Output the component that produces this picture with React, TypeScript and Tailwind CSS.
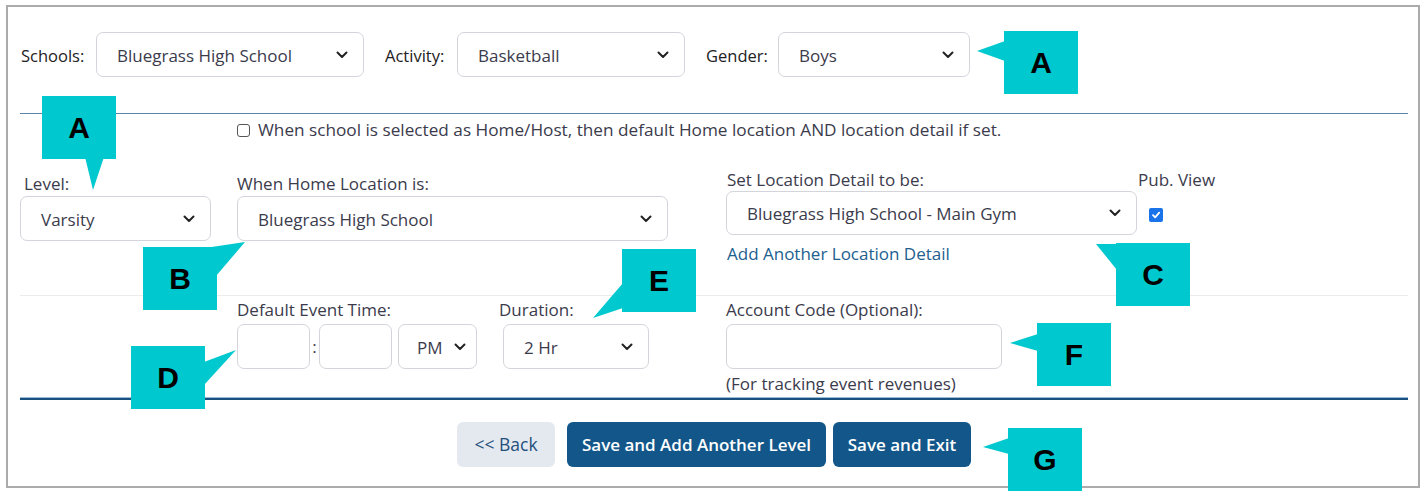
import React from "react";

const FONT = { fontFamily: '"Open Sans", "Noto Sans", Arial, sans-serif' } as React.CSSProperties;

function Chevron() {
  return (
    <svg width="12" height="8" viewBox="0 0 12 8" className="shrink-0">
      <path d="M1.5 1.5 L6 6 L10.5 1.5" fill="none" stroke="#222" strokeWidth="2" strokeLinecap="round" strokeLinejoin="round" />
    </svg>
  );
}

function Select({ value, w, h = "h-[45px]", pl = "pl-[20px]", pr = "pr-[15px]" }: { value: string; w: string; h?: string; pl?: string; pr?: string }) {
  return (
    <div className={`${w} ${h} ${pl} ${pr} shrink-0 flex items-center justify-between rounded-[7px] border border-[#d4d4dc] bg-white text-[17px] text-[#3b3b4c]`}>
      <span className="whitespace-nowrap pt-[2px]">{value}</span>
      <Chevron />
    </div>
  );
}

function Box({ w }: { w: string }) {
  return <div className={`${w} h-[45px] shrink-0 rounded-[7px] border border-[#d4d4dc] bg-white`} />;
}

type Callout = { l: string; x: number; y: number; tri: string };
const callouts: Callout[] = [
  { l: "A", x: 1004, y: 31, tri: "977,51 1005,41 1005,61" },
  { l: "A", x: 42, y: 96, tri: "85,157 93,190 104,157" },
  { l: "B", x: 143, y: 247, tri: "205,248 245,242 216,276" },
  { l: "C", x: 1116, y: 243, tri: "1096,244 1132,244 1117,270" },
  { l: "D", x: 131, y: 346, tri: "204,362 236,350 204,385" },
  { l: "E", x: 622, y: 249, tri: "593,318 623,283 623,308" },
  { l: "F", x: 1037, y: 323, tri: "1010,343 1038,334 1038,351" },
  { l: "G", x: 1008, y: 428, tri: "983,447 1009,438 1009,454" },
];

export default function App() {
  return (
    <div className="relative w-[1426px] h-[498px] bg-white overflow-hidden" style={FONT}>
      <div className="pt-[5px] pl-[6px]">
        <div className="w-[1414px] h-[483px] border-2 border-[#ababab] bg-white">
          {/* Row 1 */}
          <div className="flex items-center mt-[25px] pl-[13px] h-[45px] text-[16.5px] text-[#222]">
            <div className="w-[75px] shrink-0 pt-[3px]">Schools:</div>
            <Select value="Bluegrass High School" w="w-[268px]" />
            <div className="w-[72px] ml-[21px] shrink-0 pt-[3px]">Activity:</div>
            <Select value="Basketball" w="w-[228px]" />
            <div className="w-[72px] ml-[21px] shrink-0 pt-[3px]">Gender:</div>
            <Select value="Boys" w="w-[192px]" />
          </div>
          {/* HR */}
          <div className="mt-[36px] ml-[12px] w-[1388px] h-px bg-[#5a84a8]" />
          {/* Checkbox row */}
          <div className="mt-[5px] pl-[229px] flex items-center h-[22px] text-[17.2px] text-[#3b3b4c]">
            <div className="w-[13px] h-[13px] rounded-[3px] border border-[#555] bg-white mr-[8px] shrink-0" />
            <span className="whitespace-nowrap">When school is selected as Home/Host, then default Home location AND location detail if set.</span>
          </div>
          {/* Row 2 */}
          <div className="flex items-start h-[154px] text-[17px] text-[#3b3b4c]">
            <div className="ml-[12px] mt-[32px] flex flex-col">
              <div className="h-[22px] leading-[22px] pl-[4px]">Level:</div>
              <div className="mt-[1px]"><Select value="Varsity" w="w-[191px]" /></div>
            </div>
            <div className="ml-[26px] mt-[32px] flex flex-col">
              <div className="h-[22px] leading-[22px]">When Home Location is:</div>
              <div className="mt-[1px]"><Select value="Bluegrass High School" w="w-[431px]" /></div>
            </div>
            <div className="ml-[58px] mt-[28px] flex flex-col">
              <div className="h-[22px] leading-[22px] pl-[1px]">Set Location Detail to be:</div>
              <div><Select value="Bluegrass High School - Main Gym" w="w-[411px]" h="h-[44px]" /></div>
              <div className="mt-[8px] h-[22px] leading-[22px] pl-[1px] text-[#22608f]">Add Another Location Detail</div>
            </div>
            <div className="ml-[1px] mt-[28px] flex flex-col">
              <div className="h-[22px] leading-[22px]">Pub. View</div>
              <div className="mt-[17px] ml-[11px] w-[14px] h-[14px] rounded-[2px] bg-[#1a73e8] flex items-center justify-center">
                <svg width="10" height="10" viewBox="0 0 10 10">
                  <path d="M2 5.2 L4.2 7.4 L8.2 2.6" fill="none" stroke="#fff" strokeWidth="1.8" strokeLinecap="round" strokeLinejoin="round" />
                </svg>
              </div>
            </div>
          </div>
          {/* Divider */}
          <div className="ml-[12px] w-[1388px] h-px bg-[#ececec]" />
          {/* Row 3 */}
          <div className="flex items-start h-[101px] text-[17px] text-[#3b3b4c]">
            <div className="ml-[229px] mt-[3px] flex flex-col">
              <div className="h-[22px] leading-[22px]">Default Event Time:</div>
              <div className="mt-[3px] flex items-center">
                <Box w="w-[73px]" />
                <span className="w-[9px] text-center">:</span>
                <Box w="w-[73px]" />
                <div className="ml-[6px]"><Select value="PM" w="w-[79px]" pl="pl-[18px]" pr="pr-[10px]" /></div>
              </div>
            </div>
            <div className="ml-[22px] mt-[3px] flex flex-col">
              <div className="h-[22px] leading-[22px]">Duration:</div>
              <div className="mt-[3px] ml-[4px]"><Select value="2 Hr" w="w-[146px]" /></div>
            </div>
            <div className="ml-[77px] mt-[3px] flex flex-col">
              <div className="h-[22px] leading-[22px]">Account Code (Optional):</div>
              <div className="mt-[3px]"><Box w="w-[276px]" /></div>
              <div className="mt-[4px] h-[22px] leading-[22px]">(For tracking event revenues)</div>
            </div>
          </div>
          {/* Thick line */}
          <div className="ml-[12px] w-[1388px] h-px bg-[#9dbbd3]" />
          <div className="ml-[12px] w-[1388px] h-[2px] bg-[#18507f]" />
          {/* Buttons */}
          <div className="mt-[22px] flex items-center pl-[449px] text-[17px] font-semibold">
            <div className="w-[98px] h-[45px] rounded-[6px] bg-[#e4e9f0] text-[#1f4f7c] flex items-center justify-center font-normal text-[17.5px]">&lt;&lt; Back</div>
            <div className="ml-[12px] w-[259px] h-[45px] rounded-[6px] bg-[#13578a] text-white flex items-center justify-center">Save and Add Another Level</div>
            <div className="ml-[7px] w-[138px] h-[45px] rounded-[6px] bg-[#13578a] text-white flex items-center justify-center">Save and Exit</div>
          </div>
        </div>
      </div>
      {/* Callouts overlay */}
      <svg className="absolute left-0 top-0 pointer-events-none" width="1426" height="498">
        {callouts.map((c, i) => (
          <polygon key={i} points={c.tri} fill="#00c8cf" />
        ))}
      </svg>
      {callouts.map((c, i) => (
        <div
          key={i}
          className="absolute w-[74px] h-[63px] bg-[#00c8cf] flex items-center justify-center text-[30px] font-bold text-black"
          style={{ left: c.x, top: c.y, fontFamily: '"Liberation Sans", Arial, sans-serif' }}
        >
          {c.l}
        </div>
      ))}
    </div>
  );
}
